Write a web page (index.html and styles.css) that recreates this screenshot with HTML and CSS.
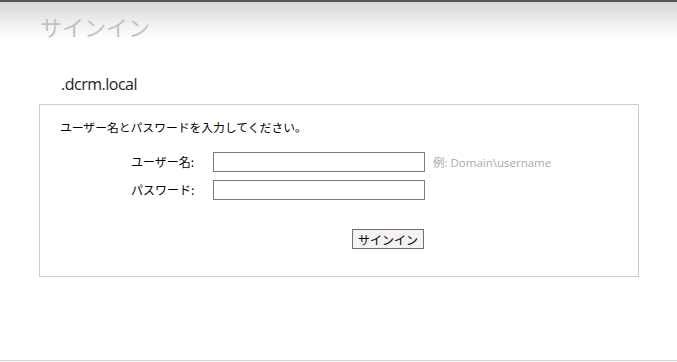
FILE: index.html
```html
<!DOCTYPE html>
<html lang="ja">

<head>
    <meta charset="UTF-8">
    <meta name="viewport" content="width=device-width, initial-scale=1.0">
    <title>サインイン</title>
    <link rel="stylesheet" href="styles.css">
</head>

<body>
    <div id="page">
        <div id="header">
            <h1 class="title">サインイン</h1>
        </div>

        <h2 class="domain">.dcrm.local</h2>

        <div id="login-box">
            <p class="intro">ユーザー名とパスワードを入力してください。</p>
            <form action="" id="login-form">
                <label for="username">ユーザー名:</label>
                <input type="text" id="username" name="username">
                <span class="hint">例: Domain\username</span>

                <label for="password">パスワード:</label>
                <input type="password" id="password" name="password">
                <span></span>

                <div class="actions">
                    <input type="submit" value="サインイン">
                </div>
            </form>
        </div>
    </div>
</body>

</html>
```

FILE: styles.css
```css
body {
    margin: 0;
    background: #fff;
    font-family: "Noto Sans CJK JP", "Liberation Sans", sans-serif;
    font-size: 12px;
    color: #000;
}

#page {
    height: 360px;
    border-bottom: 1px solid #d6d3cc;
}

#header {
    border-top: 2px solid #555;
    padding-top: 9px;
    background: linear-gradient(#d6d6d6, #f2f2f2 60%, #fff);
}

.title {
    margin: 0 0 0 40px;
    font-size: 22px;
    line-height: 30px;
    font-weight: normal;
    color: #c2c2c2;
}

.domain {
    margin: 32px 0 9px 61px;
    font-family: "Open Sans", "Noto Sans CJK JP", sans-serif;
    font-size: 16px;
    letter-spacing: -0.5px;
    line-height: 22px;
    font-weight: normal;
    color: #1e1e1e;
}

#login-box {
    margin-left: 39px;
    width: 598px;
    border: 1px solid #cccccc;
    padding: 14px 0 27px 0;
}

.intro {
    margin: 0 0 0 20px;
    font-size: 11.8px;
    line-height: 16px;
}

#login-form {
    display: grid;
    grid-template-columns: 74px 212px auto;
    row-gap: 8px;
    column-gap: 8px;
    margin: 17px 0 0 91px;
    align-items: center;
}

label {
    line-height: 20px;
}

#login-form input[type=text],
#login-form input[type=password] {
    box-sizing: border-box;
    width: 212px;
    height: 20px;
    margin: 0;
    padding: 0 3px;
    border: 1px solid #7a7a7a;
    outline: none;
}

.hint {
    color: #a8a8a8;
    font-family: "Open Sans", "Noto Sans CJK JP", sans-serif;
    font-size: 11.5px;
}

.actions {
    grid-column: 2;
    display: flex;
    justify-content: flex-end;
    margin-top: 21px;
    padding-right: 1px;
}

input[type=submit] {
    box-sizing: border-box;
    width: 72px;
    height: 20px;
    margin: 0;
    padding: 0;
    border: 1px solid #707070;
    background: #f5f1f5;
    font-family: "Noto Sans CJK JP", sans-serif;
    font-size: 12px;
    color: #000;
    cursor: pointer;
}
```
